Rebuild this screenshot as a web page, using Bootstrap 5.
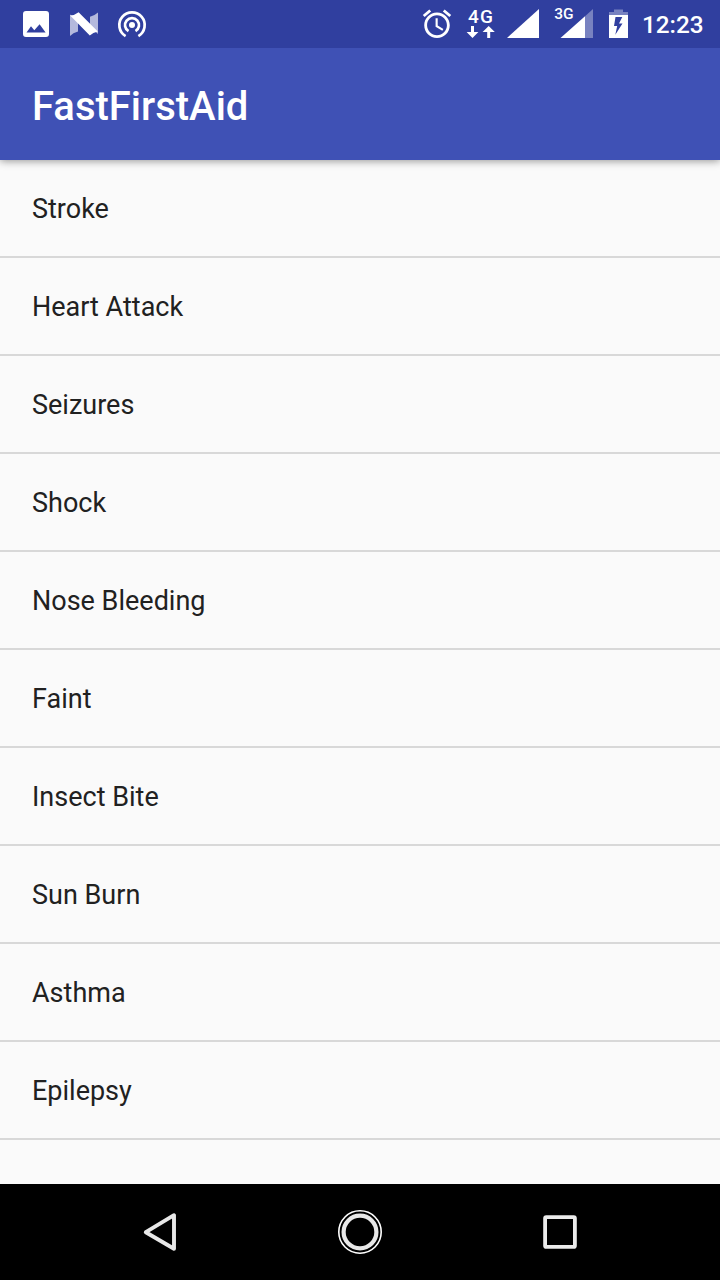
<!DOCTYPE html>
<html lang="en">
<head>
<meta charset="utf-8">
<meta name="viewport" content="width=device-width, initial-scale=1">
<title>FastFirstAid</title>
<link href="https://cdn.jsdelivr.net/npm/bootstrap@5.3.0/dist/css/bootstrap.min.css" rel="stylesheet">
<style>
  body { font-family: Roboto, sans-serif; background: #fafafa; color: #212121; }
  svg { display: block; flex: none; }
  .status-bar { height: 48px; background: #303f9f; padding-left: 12px; padding-right: 16px; }
  .status-bar text { font-family: Roboto, sans-serif; font-weight: 500; }
  .clock { font-size: 24.3px; line-height: 48px; font-weight: 500; width: 62px; white-space: nowrap; padding-top: 1px; }
  .app-bar { height: 112px; background: #3f51b5; padding: 5px 32px 0; box-shadow: 0 1px 8px rgba(0,0,0,.42); clip-path: inset(0 0 -12px 0); z-index: 1; }
  .app-title { font-size: 40px; font-weight: 500; line-height: 49px; }
  .topics .list-group-item { height: 98px; padding: 0 32px; font-size: 27px; line-height: 98px; color: #212121; background: transparent; border: solid #d8d8d8; border-width: 0 0 2px !important; }
  .nav-keys { height: 96px; background: #000; }
</style>
</head>
<body>
<div class="d-flex flex-column vh-100 overflow-hidden">
  <header class="status-bar d-flex justify-content-between text-white flex-shrink-0">
    <div class="d-flex">
      <svg width="48" height="48" viewBox="12 0 48 48" fill="#fff"><path fill-rule="evenodd" d="M26 11H46a3 3 0 0 1 3 3V34a3 3 0 0 1-3 3H26a3 3 0 0 1-3-3V14a3 3 0 0 1 3-3ZM26.5 32.4H45.6L39.6 24.2 34.3 30.3 31 26.2Z"/></svg>
      <svg width="48" height="48" viewBox="60 0 48 48"><path fill="#b4b9dd" d="M70 14.5L78 20V31.6Q73 33 70 36ZM90 16.7Q95 15.5 98 12.6V34L90 27Z"/><path fill="#fff" d="M70.2 15.6Q75 15 78.6 12.2L97.8 31.6Q93 32.6 89.8 35.4Z"/></svg>
      <svg width="48" height="48" viewBox="108 0 48 48" fill="none" stroke="#fff" stroke-width="2.7"><circle cx="132" cy="25" r="3" fill="#fff" stroke="none"/><path d="M128.5 31.1A7 7 0 1 1 135.5 31.1M125.6 36.1A12.7 12.7 0 1 1 138.4 36.1"/></svg>
    </div>
    <div class="d-flex">
      <svg width="44" height="48" viewBox="416 0 44 48" fill="#fff"><path transform="translate(419.96 6.8) scale(1.42)" d="M22 5.72l-4.6-3.86-1.29 1.53 4.6 3.86L22 5.72zM7.88 3.39L6.6 1.86 2 5.71l1.29 1.53 4.59-3.85zM12.5 8H11v6l4.75 2.85.75-1.23-4-2.37V8zM12 4c-4.97 0-9 4.03-9 9s4.02 9 9 9c4.97 0 9-4.03 9-9s-4.03-9-9-9zm0 16c-3.87 0-7-3.13-7-7s3.13-7 7-7 7 3.13 7 7-3.13 7-7 7z"/></svg>
      <svg width="42" height="48" viewBox="460 0 42 48" fill="#fff"><text x="468" y="23" font-size="19" letter-spacing="1.2">4G</text><path d="M471 26H474V32H478.4L472.5 38 466.6 32H471ZM487.2 38V32H482.6L488.7 26 494.8 32H490.2V38Z"/></svg>
      <svg width="46" height="48" viewBox="502 0 46 48"><path fill="#fff" d="M507 38L539 9V38Z"/></svg>
      <svg width="54" height="48" viewBox="548 0 54 48" fill="#fff"><text x="554.3" y="19.2" font-size="15.5" letter-spacing="0">3G</text><path fill-opacity=".35" d="M585 16.3L593 9V38H585Z"/><path d="M560.5 38L585 16.3V38Z"/></svg>
      <svg width="40" height="48" viewBox="602 0 40 48" fill="#fff"><path fill-opacity=".35" d="M614 9.5H623V12H628V15H609V12H614Z"/><path fill-rule="evenodd" d="M609 15H628V38H609ZM615.5 17L614 26H617.2L615.3 34.8 622.5 23.5H619L622.3 17Z"/></svg>
      <div class="clock">12:23</div>
    </div>
  </header>
  <nav class="app-bar d-flex align-items-center position-relative flex-shrink-0 text-white">
    <h1 class="app-title m-0">FastFirstAid</h1>
  </nav>
  <main class="flex-grow-1 overflow-hidden">
    <ul class="list-group list-group-flush topics">
      <li class="list-group-item">Stroke</li>
      <li class="list-group-item">Heart Attack</li>
      <li class="list-group-item">Seizures</li>
      <li class="list-group-item">Shock</li>
      <li class="list-group-item">Nose Bleeding</li>
      <li class="list-group-item">Faint</li>
      <li class="list-group-item">Insect Bite</li>
      <li class="list-group-item">Sun Burn</li>
      <li class="list-group-item">Asthma</li>
      <li class="list-group-item">Epilepsy</li>
    </ul>
  </main>
  <footer class="nav-keys d-flex justify-content-center flex-shrink-0">
    <svg width="200" height="96" viewBox="60 1184 200 96" fill="none" stroke="#e8e8e8" stroke-width="3.9" stroke-linejoin="round"><path d="M145.8 1232.2L174 1215.2V1248.8Z"/></svg>
    <svg width="200" height="96" viewBox="260 1184 200 96" fill="none"><circle cx="360" cy="1232" r="21.2" stroke="#fff" stroke-width="1.6"/><circle cx="360" cy="1232" r="16.4" stroke="#e8e8e8" stroke-width="4.2"/></svg>
    <svg width="200" height="96" viewBox="460 1184 200 96" fill="none"><rect x="545.1" y="1217.1" width="29.8" height="29.8" rx="1.2" stroke="#ececec" stroke-width="3.8"/></svg>
  </footer>
</div>
<script src="https://cdn.jsdelivr.net/npm/bootstrap@5.3.0/dist/js/bootstrap.bundle.min.js"></script>
</body>
</html>
